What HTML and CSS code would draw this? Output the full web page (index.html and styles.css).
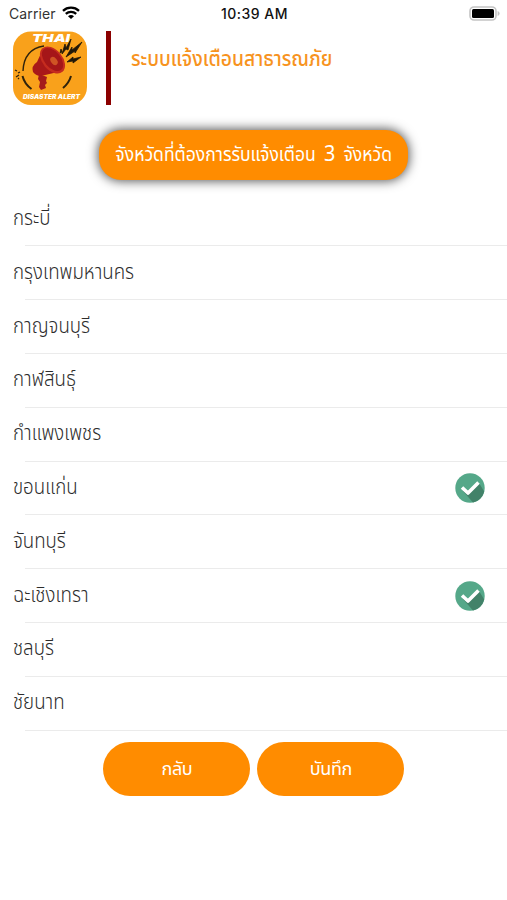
FILE: index.html
```html
<!DOCTYPE html>
<html lang="th">
<head>
<meta charset="utf-8">
<title>ระบบแจ้งเตือนสาธารณภัย</title>
<link rel="stylesheet" href="styles.css">
</head>
<body>
<div class="status">
  <span class="carrier">Carrier
    <svg class="wifi" viewBox="0 0 18 13" width="18" height="13"><path d="M1 4.8C5.5.6 12.5.6 17 4.8M3.8 7.8c3-2.7 7.4-2.7 10.4 0" fill="none" stroke="#000" stroke-width="2.3"/><path d="M6 10.2c1.8-1.5 4.2-1.5 6 0L9 13z"/></svg>
  </span>
  <span class="time">10:39 AM</span>
  <svg class="battery" viewBox="0 0 31 15" width="31" height="15"><rect x="1" y="1" width="26" height="13" rx="4" fill="#fff" stroke="#c4c4c4" stroke-width="1.6"/><rect x="3" y="3" width="22" height="9" rx="1.5"/><path d="M28.6 5q2 .8 2 2.5t-2 2.5z" fill="#c4c4c4"/></svg>
</div>
<header class="header">
  <svg class="logo" viewBox="0 0 74 74" width="74" height="74">
    <rect y=".5" width="74" height="73.5" rx="18" fill="#f9a11b"/>
    <text class="logo-title" x="19" y="11" textLength="38" lengthAdjust="spacingAndGlyphs">THAI</text>
    <g fill="none" stroke="#30230c"><path d="M10 40Q11 18 31 15" stroke-width="1.4"/><path d="M9.500 45q2 8 9 13M58 45q-2 7-8 12" stroke-width="2"/></g>
    <path d="M2 39l2 1M5 42l2-1M3 46l3-2M5 47l1 1" stroke="#30230c" stroke-width="1.3"/>
    <path d="M49 23l3-10 1 4 5-9-3 11-2-1zM53 26l6-10v3l10-8-7 11v-2zM54 31l6-5v2l8-2-8 6v-2zM47 22l1-4 1 3z" fill="#211808" stroke="#211808" stroke-width=".8"/>
    <path d="M26 43l8 3-1 4 1 2-2 2 1 3-5 2-2-3 1-5-2-3z" fill="#a51a1b"/>
    <path d="M30 18L24 31q-6 4-4 10 3 4 8 4l21-5z" fill="#a91819"/>
    <ellipse cx="39.500" cy="29" rx="10" ry="15.500" transform="rotate(-40 39.500 29)" fill="#c52c1f"/>
    <ellipse cx="39.500" cy="28.500" rx="8" ry="13.500" transform="rotate(-40 39.500 28.500)" fill="#a51618"/>
    <ellipse cx="41" cy="30" rx="3" ry="4.500" transform="rotate(-40 41 30)" fill="#cf5424"/>
    <text class="logo-sub" x="10" y="68" textLength="57" lengthAdjust="spacingAndGlyphs">DISASTER ALERT</text>
  </svg>
  <div class="bar"></div>
  <h1 class="title">ระบบแจ้งเตือนสาธารณภัย</h1>
</header>
<div class="banner"><span class="banner-text">จังหวัดที่ต้องการรับแจ้งเตือน <span class="count">3</span> จังหวัด</span></div>
<ul class="list">
  <li class="row"><span class="name">กระบี่</span></li>
  <li class="row"><span class="name">กรุงเทพมหานคร</span></li>
  <li class="row"><span class="name">กาญจนบุรี</span></li>
  <li class="row"><span class="name">กาฬสินธุ์</span></li>
  <li class="row"><span class="name">กำแพงเพชร</span></li>
  <li class="row"><span class="name">ขอนแก่น</span><svg class="check" viewBox="0 0 30 30" width="30" height="30"><circle cx="15" cy="15" r="14.7" fill="#55a889"/><path d="M24 10l5.200 8.500A15 15 0 0 1 18 29.400L7 17l6 3z" fill="#428269"/><path d="M7 14.500l6 5.500L23.500 9.500" fill="none" stroke="#fff" stroke-width="3.600" stroke-linejoin="round"/></svg></li>
  <li class="row"><span class="name">จันทบุรี</span></li>
  <li class="row"><span class="name">ฉะเชิงเทรา</span><svg class="check" viewBox="0 0 30 30" width="30" height="30"><circle cx="15" cy="15" r="14.7" fill="#55a889"/><path d="M24 10l5.200 8.500A15 15 0 0 1 18 29.400L7 17l6 3z" fill="#428269"/><path d="M7 14.500l6 5.500L23.500 9.500" fill="none" stroke="#fff" stroke-width="3.600" stroke-linejoin="round"/></svg></li>
  <li class="row"><span class="name">ชลบุรี</span></li>
  <li class="row"><span class="name">ชัยนาท</span></li>
</ul>
<div class="actions"><button class="btn">กลับ</button><button class="btn">บันทึก</button></div>
</body>
</html>
```
FILE: styles.css
```css
* { box-sizing: border-box; }
body { margin: 0; height: 900px; overflow: hidden; background: #fff; font-family: "Noto Sans Thai", "Prompt", "Kanit", "Noto Sans", sans-serif; }
.status { height: 31px; padding: 6px 7px 0 9px; display: grid; grid-template-columns: 1fr auto 1fr; align-items: start; font: 14px/16px Inter, sans-serif; color: #111; }
.carrier { display: flex; gap: 6px; color: #333; letter-spacing: .1px; }
.time { font-weight: 500; letter-spacing: .5px; }
.battery { justify-self: end; }
.header { display: flex; height: 74px; padding-left: 13px; }
.bar { width: 5px; height: 74px; margin-left: 19px; background: #8b0000; }
.logo-title { font: italic 900 11px Inter, sans-serif; fill: #fff; }
.logo-sub { font: italic 900 6px Inter, sans-serif; fill: #fff; }
.title { margin: 13px 0 0 20px; font-size: 20.5px; line-height: 32px; font-weight: 500; color: #f7931e; white-space: nowrap; transform: scaleX(.94); transform-origin: left; }
.banner { width: 309px; height: 50px; margin: 25px 0 0 99px; padding-bottom: 2px; border-radius: 22px; background: #ff8c00; box-shadow: 0 0 11px 1px #555; display: flex; align-items: center; justify-content: center; color: #fff; font-size: 19.5px; white-space: nowrap; }
.banner-text { transform: scaleX(.9); word-spacing: 4px; }
.count { font-size: 22px; }
.list { margin: 12.6px 0 0; padding: 0; list-style: none; }
.row { height: 53.8px; padding: 0 22px 0 13px; display: flex; align-items: center; justify-content: space-between; font-size: 21.5px; font-weight: 300; color: #2c2c2c; background: linear-gradient(#ebebeb, #ebebeb) 25px 100% / 100% 1px no-repeat; }
.name { margin-bottom: 2px; transform: scaleX(.87); transform-origin: left; }
.actions { display: flex; gap: 7px; margin: 11.8px 0 0 103.4px; }
.btn { width: 147px; height: 54px; padding: 0; border: 0; border-radius: 27px; background: #ff8c00; color: #fff; font-family: inherit; font-size: 18px; letter-spacing: -.4px; }
```
